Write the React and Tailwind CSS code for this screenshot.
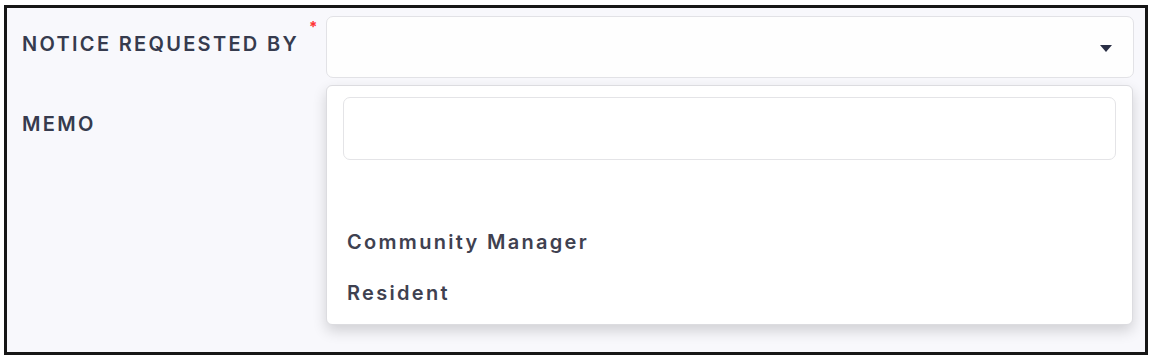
export default function App() {
  const font = { fontFamily: "Inter, 'Open Sans', sans-serif" };
  return (
    <div className="w-[1152px] h-[362px] bg-white pt-[5px] pl-[4px]" style={font}>
      <div className="relative w-[1144px] h-[350px] border-[3px] border-[#161616] bg-[#f8f8fc] pl-[15px] pr-[11px]">
        <div className="flex">
          <div className="w-[304px] flex items-start pt-[23px]">
            <span className="text-[20px] leading-[26px] font-semibold tracking-[2.3px] text-[#363b4e]">
              NOTICE REQUESTED BY
            </span>
            <span className="ml-[10px] -mt-[14px] text-[15px] leading-[20px] font-bold text-[#ff3333]">*</span>
          </div>
          <div className="flex-1 mt-[8px] h-[62px] rounded-[7px] border border-[#e2e2e6] bg-[#fefefe] flex items-center justify-end pr-[21px]">
            <svg width="12" height="7" viewBox="0 0 12 7" className="mt-[3px]">
              <path d="M0 0 H12 L6 7 Z" fill="#2a2f45" />
            </svg>
          </div>
        </div>
        <div className="pt-[33px]">
          <span className="text-[20px] leading-[26px] font-semibold tracking-[2.3px] text-[#363b4e]">MEMO</span>
        </div>

        <div className="absolute left-[319px] top-[77px] w-[807px] h-[240px] rounded-[6px] border border-[#dcdce0] bg-white shadow-[0_6px_14px_rgba(0,0,0,0.16)] px-[16px] pt-[11px]">
          <div className="h-[63px] rounded-[7px] border border-[#e4e4e7] bg-white"></div>
          <div className="mt-[5px] flex flex-col">
            <div className="h-[51px]"></div>
            <div className="h-[51px] flex items-center pl-[4px] text-[20px] font-semibold tracking-[2.3px] text-[#3f4150]">
              Community Manager
            </div>
            <div className="h-[51px] flex items-center pl-[4px] text-[20px] font-semibold tracking-[2.3px] text-[#3f4150]">
              Resident
            </div>
          </div>
        </div>
      </div>
    </div>
  );
}
